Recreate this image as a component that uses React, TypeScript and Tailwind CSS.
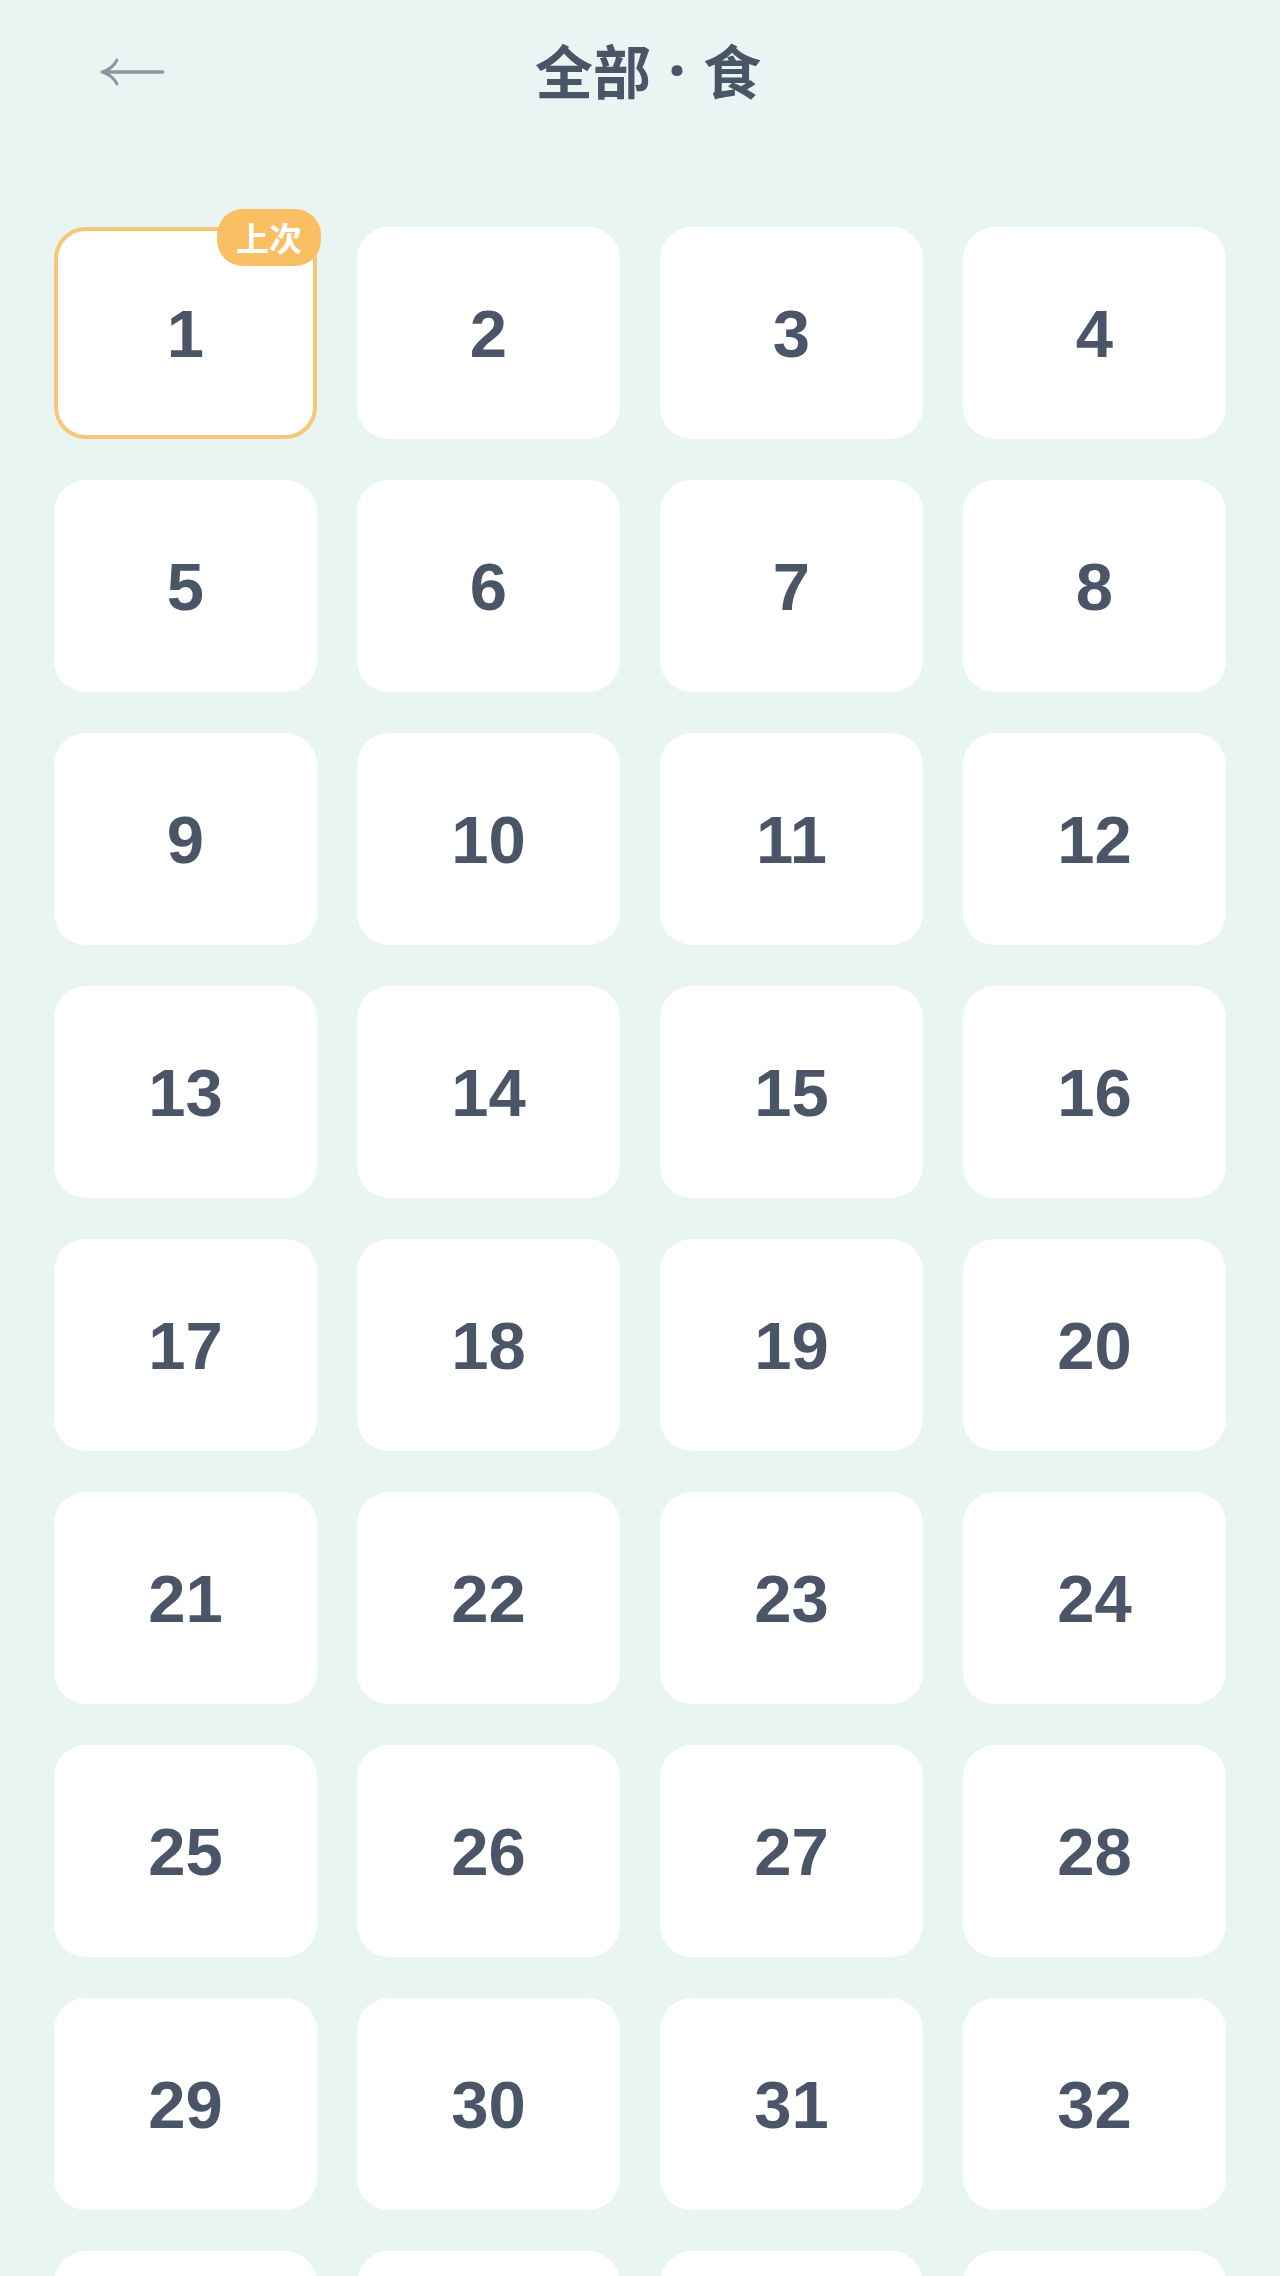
import React from "react";

const items = Array.from({ length: 36 }, (_, i) => i + 1);

export default function App() {
  return (
    <div className="h-[2276px] w-[1280px] overflow-hidden bg-[#e8f5f2]">
      <header className="grid h-[138px] grid-cols-[1fr_auto_1fr] items-center">
        <div className="flex items-center pl-[100px] pt-[6px]">
          <svg width="66" height="30" viewBox="0 0 66 30" fill="none">
            <path d="M3 15 H64" stroke="#8b96a3" strokeWidth="3.6" strokeLinecap="butt" />
            <path
              d="M17 3 C14 9 9 13 2 15 C9 17 14 21 17 27"
              stroke="#8b96a3"
              strokeWidth="3"
              strokeLinecap="round"
              strokeLinejoin="round"
              fill="none"
            />
          </svg>
        </div>
        <h1
          className="flex items-center pl-[16px] text-[58px] font-bold leading-none text-[#4a5568]"
          style={{ fontFamily: '"Noto Sans CJK SC", "Noto Sans", sans-serif' }}
        >
          <span>全部</span>
          <span
            className="inline-block w-[52px] text-center text-[64px]"
            style={{ fontFamily: '"Noto Sans", sans-serif' }}
          >
            ·
          </span>
          <span>食</span>
        </h1>
        <div />
      </header>
      <main className="mt-[89px] grid grid-cols-4 gap-x-10 gap-y-[41px] px-[54px]">
        {items.map((n) => (
          <div
            key={n}
            className={
              n === 1
                ? "relative flex h-[212px] items-center justify-center rounded-[32px] border-4 border-[#f8c677] bg-white"
                : "relative flex h-[212px] items-center justify-center rounded-[32px] bg-white"
            }
          >
            {n <= 32 && (
              <span
                className="text-[67px] font-bold leading-none text-[#4a5568]"
                style={{ fontFamily: '"Liberation Sans", Arial, sans-serif' }}
              >
                {n}
              </span>
            )}
            {n === 1 && (
              <span
                className="absolute -right-[8px] -top-[22px] flex h-[57px] items-center rounded-[26px] bg-[#fbbf63] px-[19px] text-[33px] font-bold leading-none text-white"
                style={{ fontFamily: '"Noto Sans CJK SC", "Noto Sans", sans-serif' }}
              >
                上次
              </span>
            )}
          </div>
        ))}
      </main>
    </div>
  );
}
